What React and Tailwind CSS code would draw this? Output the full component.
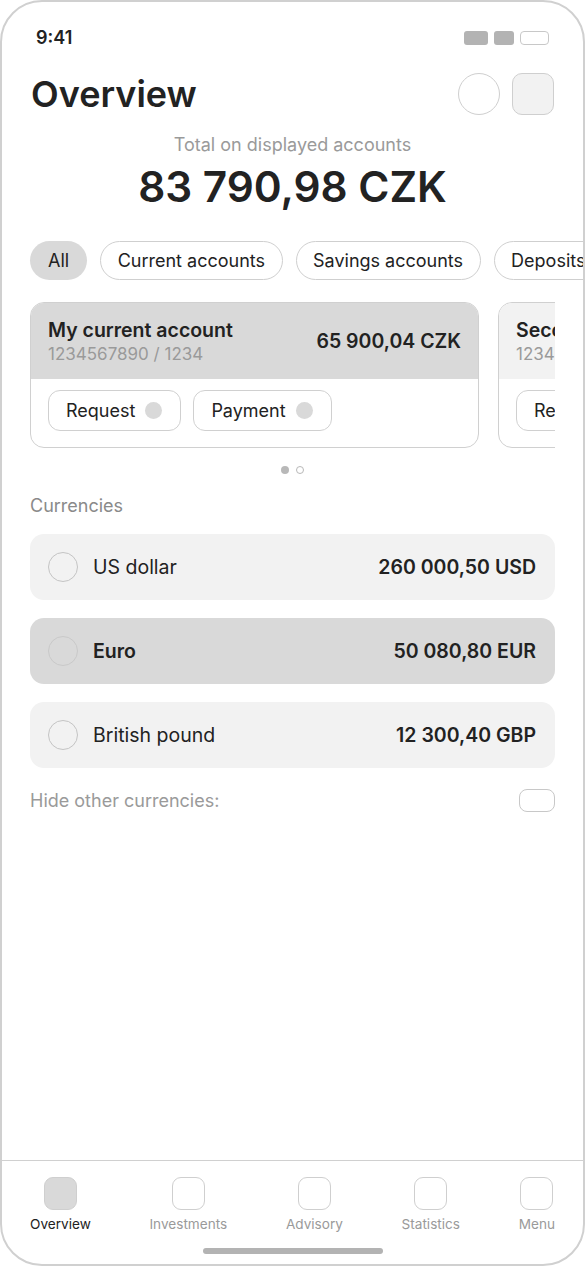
const chips = ["All", "Current accounts", "Savings accounts", "Deposits"];

const currencies = [
  { name: "US dollar", amount: "260 000,50 USD", active: false },
  { name: "Euro", amount: "50 080,80 EUR", active: true },
  { name: "British pound", amount: "12 300,40 GBP", active: false },
];

const tabs = ["Overview", "Investments", "Advisory", "Statistics", "Menu"];

const AccountCard = ({ name, number, amount, active }) => (
  <div className="w-[449px] shrink-0 h-[146px] rounded-[14px] border border-[#d0d0d0] overflow-hidden bg-white">
    <div
      className={`${
        active ? "bg-[#d9d9d9]" : "bg-[#f2f2f2]"
      } h-[76px] px-[17px] flex items-center justify-between`}
    >
      <div className="flex flex-col">
        <span className="text-[19.5px] leading-[23px] font-semibold text-[#222]">
          {name}
        </span>
        <span className="text-[17px] leading-[20px] text-[#9a9a9a] mt-[2px]">
          {number}
        </span>
      </div>
      <span className="text-[19.5px] leading-[23px] font-semibold text-[#222]">
        {amount}
      </span>
    </div>
    <div className="flex gap-[12px] px-[17px] pt-[11px]">
      {["Request", "Payment"].map((label) => (
        <div
          key={label}
          className="h-[41px] flex items-center gap-[10px] pl-[17px] pr-[18px] rounded-[12px] border border-[#d0d0d0] text-[18px] text-[#222]"
        >
          {label}
          <span className="w-[17px] h-[17px] rounded-full bg-[#d9d9d9]" />
        </div>
      ))}
    </div>
  </div>
);

const App = () => {
  return (
    <div
      className="w-[585px] h-[1266px] bg-white border-2 border-[#d0d0d0] rounded-[42px] overflow-hidden flex flex-col text-[#222]"
      style={{ fontFamily: "Inter, 'Noto Sans', sans-serif" }}
    >
      {/* status bar */}
      <div className="flex items-center justify-between pl-[34px] pr-[34px] pt-[22px] h-[50px]">
        <span className="text-[18px] leading-[22px] font-semibold">9:41</span>
        <div className="flex items-center gap-[6px]">
          <span className="w-[24px] h-[14px] rounded-[3px] bg-[#b3b3b3]" />
          <span className="w-[20px] h-[14px] rounded-[3px] bg-[#b3b3b3]" />
          <span className="w-[29px] h-[14px] rounded-[4px] border border-[#c8c8c8]" />
        </div>
      </div>

      {/* header */}
      <div className="flex items-center justify-between pl-[29px] pr-[29px] mt-[20px] h-[44px]">
        <h1 className="text-[36px] leading-[44px] font-semibold">Overview</h1>
        <div className="flex items-center gap-[12px]">
          <span className="w-[42px] h-[42px] rounded-full border border-[#cfcfcf]" />
          <span className="w-[42px] h-[42px] rounded-[10px] border border-[#cfcfcf] bg-[#f2f2f2]" />
        </div>
      </div>

      {/* total */}
      <div className="flex flex-col items-center mt-[19px]">
        <span className="text-[18px] leading-[20px] text-[#9a9a9a]">
          Total on displayed accounts
        </span>
        <span className="text-[42.3px] leading-[50px] font-semibold mt-[7px]">
          83 790,98 CZK
        </span>
      </div>

      {/* chips */}
      <div className="flex gap-[13px] pl-[28px] mt-[29px] whitespace-nowrap">
        {chips.map((c, i) => (
          <div
            key={c}
            className={`h-[39px] shrink-0 flex items-center rounded-full text-[18px] ${
              i === 0
                ? "bg-[#d9d9d9] px-[18px]"
                : "border border-[#cfcfcf] bg-white px-[16.5px]"
            }`}
          >
            {c}
          </div>
        ))}
      </div>

      {/* accounts carousel */}
      <div className="mx-[28px] mt-[22px] overflow-hidden">
        <div className="flex gap-[19px]">
          <AccountCard
            name="My current account"
            number="1234567890 / 1234"
            amount="65 900,04 CZK"
            active
          />
          <AccountCard
            name="Second account"
            number="1234567890 / 1234"
            amount="12 000,00 CZK"
          />
        </div>
      </div>

      {/* pager */}
      <div className="flex justify-center gap-[7px] mt-[18px]">
        <span className="w-[8px] h-[8px] rounded-full bg-[#b8b8b8]" />
        <span className="w-[8px] h-[8px] rounded-full border border-[#b8b8b8]" />
      </div>

      {/* currencies */}
      <div className="px-[28px] mt-[22px]">
        <div className="text-[18px] leading-[20px] text-[#8a8a8a]">Currencies</div>
        <div className="flex flex-col gap-[18px] mt-[18px]">
          {currencies.map((c) => (
            <div
              key={c.name}
              className={`h-[66px] rounded-[14px] flex items-center justify-between pl-[18px] pr-[19px] ${
                c.active ? "bg-[#d9d9d9]" : "bg-[#f2f2f2]"
              }`}
            >
              <div className="flex items-center gap-[15px]">
                <span
                  className={`w-[30px] h-[30px] rounded-full border-[1.5px] ${
                    c.active ? "border-[#c9c9c9]" : "border-[#c4c4c4]"
                  }`}
                />
                <span
                  className={`text-[19.5px] leading-[23px] ${
                    c.active ? "font-semibold" : ""
                  }`}
                >
                  {c.name}
                </span>
              </div>
              <span className="text-[19.5px] leading-[23px] font-semibold">
                {c.amount}
              </span>
            </div>
          ))}
        </div>
        <div className="flex items-center justify-between mt-[21px]">
          <span className="text-[18px] leading-[20px] text-[#9a9a9a]">
            Hide other currencies:
          </span>
          <span className="w-[36px] h-[23px] rounded-[8px] border border-[#c8c8c8]" />
        </div>
      </div>

      <div className="flex-1" />

      {/* bottom nav */}
      <div className="border-t border-[#d0d0d0] pt-[16px]">
        <div className="flex justify-between px-[28px]">
          {tabs.map((t, i) => (
            <div key={t} className="flex flex-col items-center">
              <span
                className={`w-[33px] h-[33px] rounded-[9px] border border-[#cfcfcf] ${
                  i === 0 ? "bg-[#d9d9d9]" : "bg-white"
                }`}
              />
              <span
                className={`text-[13.6px] leading-[17px] mt-[6px] ${
                  i === 0 ? "text-[#222]" : "text-[#9a9a9a]"
                }`}
              >
                {t}
              </span>
            </div>
          ))}
        </div>
        <div className="flex justify-center mt-[15px] pb-[10px]">
          <span className="w-[180px] h-[6px] rounded-full bg-[#b3b3b3]" />
        </div>
      </div>
    </div>
  );
};

export default App;
